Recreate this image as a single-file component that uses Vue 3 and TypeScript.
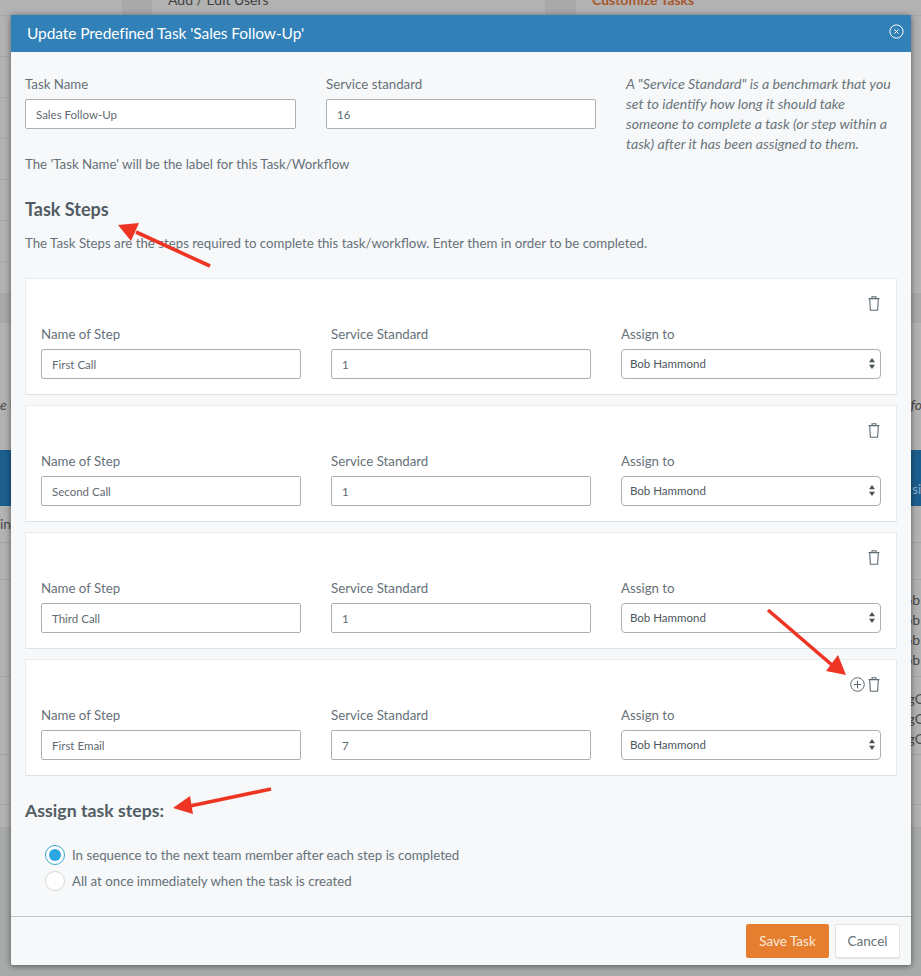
<script setup lang="ts">
interface Step { name: string; standard: string }
const steps: Step[] = [
  { name: 'First Call', standard: '1' },
  { name: 'Second Call', standard: '1' },
  { name: 'Third Call', standard: '1' },
  { name: 'First Email', standard: '7' },
]
const leftRows: number[] = [1, 2, 3, 4, 5, 6]
</script>

<template>
  <div class="page">
    <div class="bg">
      <div class="bg-top">
        <div class="bg-top-cell"></div>
        <div class="bg-top-gap"></div>
        <div class="bg-top-cell"><span class="bg-link">Add / Edit Users</span></div>
        <div class="bg-top-gap"></div>
        <div class="bg-top-cell"><span class="bg-orange">Customize Tasks</span></div>
      </div>
      <div class="bg-list">
        <div v-for="r in leftRows" :key="r" class="bg-list-row"></div>
      </div>
      <div class="bg-band"></div>
      <div class="bg-note"><span>e t</span><span>fo</span></div>
      <div class="bg-blue"><span>si</span></div>
      <div class="bg-row r1"><span>in</span></div>
      <div class="bg-row r2"></div>
      <div class="bg-row r3"><span></span><span class="stack ob">ob<br>ob<br>ob<br>ob</span></div>
      <div class="bg-row r4"><span></span><span class="stack gc">gC<br>gC<br>gC</span></div>
      <div class="bg-row r5"></div>
      <div class="bg-row r6"></div>
    </div>

    <section class="modal">
      <header class="modal-head">
        <h1>Update Predefined Task 'Sales Follow-Up'</h1>
        <button class="close" aria-label="Close">
          <svg width="15" height="15" viewBox="0 0 15 15" fill="none" stroke="#fff" stroke-width="1">
            <circle cx="7.5" cy="7.5" r="6.6" />
            <path d="M5.4 5.4l4.2 4.2M9.6 5.4l-4.2 4.2" />
          </svg>
        </button>
      </header>

      <div class="modal-body">
        <div class="top-grid">
          <div class="field">
            <label>Task Name</label>
            <div class="input">Sales Follow-Up</div>
          </div>
          <div class="field">
            <label>Service standard</label>
            <div class="input">16</div>
          </div>
          <p class="hint">A "Service Standard" is a benchmark that you set to identify how long it should take someone to complete a task (or step within a task) after it has been assigned to them.</p>
        </div>
        <p class="label-note">The 'Task Name' will be the label for this Task/Workflow</p>

        <h2 class="steps-title">Task Steps</h2>
        <p class="steps-note">The Task Steps are the steps required to complete this task/workflow. Enter them in order to be completed.</p>

        <div class="steps">
          <div v-for="(step, i) in steps" :key="step.name" class="step">
            <div class="step-tools">
              <svg v-if="i === steps.length - 1" class="plus" width="15" height="15" viewBox="0 0 15 15" fill="none" stroke="#5d6a72" stroke-width="1">
                <circle cx="7.5" cy="7.5" r="6.8" />
                <path d="M7.5 3.8v7.4M3.8 7.5h7.4" />
              </svg>
              <svg width="12" height="15" viewBox="0 0 12 15" fill="none" stroke="#5d6a72" stroke-width="1.1">
                <path d="M.6 2.6h10.8M4 2.4V.7h4v1.7M1.7 2.8l.7 11.4h7.2l.7-11.4" />
              </svg>
            </div>
            <div class="step-grid">
              <div class="field">
                <label>Name of Step</label>
                <div class="input">{{ step.name }}</div>
              </div>
              <div class="field">
                <label>Service Standard</label>
                <div class="input">{{ step.standard }}</div>
              </div>
              <div class="field">
                <label>Assign to</label>
                <div class="input select">
                  Bob Hammond
                  <svg width="6" height="11" viewBox="0 0 6 11" fill="#4a5359">
                    <path d="M3 0L6 4.2H0zM3 11L0 6.8h6z" />
                  </svg>
                </div>
              </div>
            </div>
          </div>
        </div>

        <h2 class="assign-title">Assign task steps:</h2>
        <div class="radios">
          <div class="radio-row">
            <span class="radio on"><i></i></span>
            <span>In sequence to the next team member after each step is completed</span>
          </div>
          <div class="radio-row">
            <span class="radio"></span>
            <span>All at once immediately when the task is created</span>
          </div>
        </div>
      </div>

      <footer class="modal-foot">
        <button class="btn save">Save Task</button>
        <button class="btn cancel">Cancel</button>
      </footer>
    </section>

    <svg class="arrows" width="921" height="976" viewBox="0 0 921 976" fill="#ee3524" stroke="none" aria-hidden="true">
      <path d="M210 266L136 232" stroke="#ee3524" stroke-width="3.6" />
      <path d="M118 225L139 223L131 241Z" />
      <path d="M768 610L832 665" stroke="#ee3524" stroke-width="3.6" />
      <path d="M846 675L826 671L838 655Z" />
      <path d="M271 789L190 806" stroke="#ee3524" stroke-width="3.6" />
      <path d="M173 808L190 796L193 814Z" />
    </svg>
  </div>
</template>

<style>
html, body { margin: 0; padding: 0; }
</style>

<style scoped>
* { box-sizing: border-box; }
.page {
  position: relative;
  width: 921px;
  height: 976px;
  overflow: hidden;
  background: #a8aaaa;
  font-family: "Lato", "Noto Sans", sans-serif;
  color: #667179;
}
.bg { height: 828px; background: #b2b2b2; color: #4a4a4a; font-size: 14px; }
.bg-top {
  display: grid;
  grid-template-columns: 122px 30px 393px 31px 1fr;
  height: 16px;
  border-bottom: 1px solid #a6a6a6;
  overflow: hidden;
}
.bg-top-cell { padding-left: 16px; line-height: 0; font-size: 14px; }
.bg-top-gap { background: #a9a9a9; }
.bg-link { color: #404040; }
.bg-orange { color: #a8582c; font-weight: 700; }
.bg-list { width: 122px; height: 277px; }
.bg-list-row { height: 41px; border-bottom: 1px solid #a6a6a6; }
.bg-band { height: 30px; background: #a9a9a9; }
.bg-note {
  display: flex;
  justify-content: space-between;
  height: 127px;
  padding-top: 73px;
  font-style: italic;
  margin-right: -1px;
}
.bg-blue {
  height: 56px;
  background: #1c5f8f;
  color: #8fb4cc;
  text-align: right;
  line-height: 78px;
  font-size: 13px;
}
.bg-row { display: flex; justify-content: space-between; border-bottom: 1px solid #a3a3a3; }
.r1 { height: 37px; padding-top: 9px; }
.r2 { height: 37px; }
.r3 { height: 97px; padding-top: 10px; }
.r4 { height: 78px; padding-top: 12px; }
.r5 { height: 50px; }
.r6 { height: 23px; }
.stack { line-height: 20px; }
.ob { margin-right: 1px; }
.gc { margin-right: -3px; }

.modal {
  position: absolute;
  left: 11px;
  top: 15px;
  width: 900px;
  height: 950px;
  display: flex;
  flex-direction: column;
  background: #f6f8f9;
  box-shadow: 0 1px 6px rgba(0, 0, 0, 0.5);
  border-radius: 2px;
}
.modal-head {
  display: flex;
  align-items: center;
  justify-content: space-between;
  height: 37px;
  padding: 0 7px 0 16px;
  background: #3180b8;
  color: #fff;
  flex: none;
}
.modal-head h1 { margin: -2px 0 0; font-size: 15.5px; font-weight: 400; letter-spacing: -0.08px; }
.close { display: flex; padding: 0; border: 0; background: none; margin-top: -4px; }
.modal-body { flex: 1; padding: 24px 14px 0; min-height: 0; }
.top-grid {
  display: grid;
  grid-template-columns: 271px 270px 1fr;
  column-gap: 30px;
  height: 80px;
}
.field label { display: block; font-size: 13.28px; line-height: 17px; margin-bottom: 6px; }
.input {
  display: flex;
  align-items: center;
  height: 30px;
  padding: 0 10px;
  background: #fff;
  border: 1px solid #acb0b3;
  border-radius: 2px;
  font-size: 11.5px;
  color: #5f6a71;
}
.hint {
  margin: -2px 0 0;
  font-size: 14.2px;
  font-style: italic;
  line-height: 20px;
  color: #6a757c;
  width: 272px;
}
.label-note { margin: 0; font-size: 13.28px; line-height: 17px; }
.steps-title { margin: 25px 0 0; font-size: 18px; font-weight: 700; line-height: 22px; color: #515c64; }
.steps-note { margin: 15px 0 0; font-size: 13.28px; line-height: 17px; white-space: nowrap; }
.steps { display: flex; flex-direction: column; gap: 10px; margin-top: 26px; }
.step {
  height: 117px;
  padding: 17px 15px 0;
  background: #fff;
  border: 1px solid #e9ecee;
  border-bottom-color: #dfe2e4;
}
.step-tools { display: flex; justify-content: flex-end; align-items: center; gap: 3px; height: 15px; padding-right: 1px; }
.step-grid {
  display: grid;
  grid-template-columns: 260px 260px 260px;
  column-gap: 30px;
  margin-top: 15px;
}
.select {
  justify-content: space-between;
  padding: 0 5px 2px 8px;
  border-radius: 4px;
  color: #4c565c;
}
.assign-title { margin: 24px 0 0; font-size: 17.7px; font-weight: 700; line-height: 22px; color: #515c64; }
.radios { margin-top: 20px; padding-left: 20px; }
.radio-row { display: flex; align-items: center; gap: 7px; height: 26px; font-size: 13.28px; }
.radio {
  display: flex;
  align-items: center;
  justify-content: center;
  width: 20px;
  height: 20px;
  background: #fff;
  border: 1px solid #d6d9db;
  border-radius: 50%;
}
.radio.on { border-color: #39a9cf; }
.radio.on i { width: 12px; height: 12px; border-radius: 50%; background: #2aa7e0; }
.modal-foot {
  display: flex;
  justify-content: flex-end;
  gap: 6px;
  height: 49px;
  flex: none;
  padding: 7px 11px 0 0;
  border-top: 1px solid #c4c8ca;
}
.btn { height: 34px; border-radius: 2px; font: inherit; font-size: 13.5px; padding: 0; }
.save { width: 83px; background: #e67e30; border: 1px solid #e67e30; color: #fbeadb; }
.cancel { width: 65px; background: #fff; border: 1px solid #e2e5e7; color: #667179; box-shadow: 0 1px 1px rgba(0, 0, 0, 0.08); }
.arrows { position: absolute; left: 0; top: 0; pointer-events: none; }
</style>
